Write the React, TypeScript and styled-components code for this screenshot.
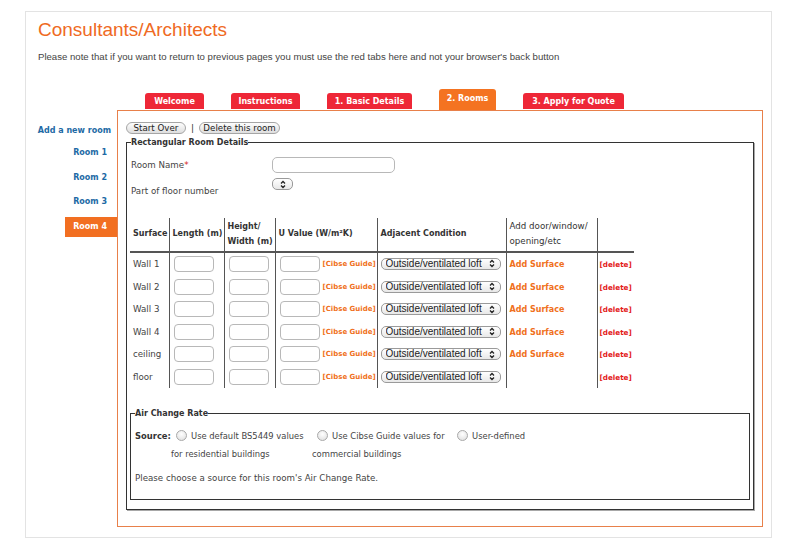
import styled, { createGlobalStyle } from "styled-components";

const GlobalStyle = createGlobalStyle`
  body {
    margin: 0;
    background: #fff;
    font-family: "DejaVu Sans", Verdana, sans-serif;
    color: #444;
  }
`;

const tabs = [
  { label: "Welcome", width: 59 },
  { label: "Instructions", width: 69 },
  { label: "1. Basic Details", width: 85 },
  { label: "2. Rooms", width: 57, active: true },
  { label: "3. Apply for Quote", width: 101 },
];

const surfaces = [
  { name: "Wall 1", add: true },
  { name: "Wall 2", add: true },
  { name: "Wall 3", add: true },
  { name: "Wall 4", add: true },
  { name: "ceiling", add: true },
  { name: "floor", add: false },
];

function Arrows() {
  return (
    <svg width="6" height="9" viewBox="0 0 6 9">
      <path d="M1 3.5 L3 1.5 L5 3.5" fill="none" stroke="#222" strokeWidth="1.3" />
      <path d="M1 5.5 L3 7.5 L5 5.5" fill="none" stroke="#222" strokeWidth="1.3" />
    </svg>
  );
}

export default function App() {
  return (
    <>
      <GlobalStyle />
      <Card>
        <Title>Consultants/Architects</Title>
        <Note>
          Please note that if you want to return to previous pages you must use the red tabs here
          and not your browser's back button
        </Note>
        <TabBar>
          {tabs.map((t) => (
            <Tab key={t.label} $width={t.width} $active={!!t.active}>
              {t.label}
            </Tab>
          ))}
        </TabBar>
        <Main>
          <Sidebar>
            <AddLink>Add a new room</AddLink>
            <RoomLink>Room 1</RoomLink>
            <RoomLink>Room 2</RoomLink>
            <RoomLink>Room 3</RoomLink>
            <RoomLink $active>Room 4</RoomLink>
          </Sidebar>
          <Panel>
            <ButtonRow>
              <SmallButton $width={60}>Start Over</SmallButton>
              <Pipe>|</Pipe>
              <SmallButton $width={81}>Delete this room</SmallButton>
            </ButtonRow>
            <RoomFieldset>
              <Legend>Rectangular Room Details</Legend>
              <NameRow>
                <FieldLabel>
                  Room Name<Star>*</Star>
                </FieldLabel>
                <NameInput type="text" />
              </NameRow>
              <FloorRow>
                <FloorLabel>Part of floor number</FloorLabel>
                <SelectBox $width={21}>
                  <Select />
                  <ArrowSlot $center>
                    <Arrows />
                  </ArrowSlot>
                </SelectBox>
              </FloorRow>
              <SurfaceTable>
                <colgroup>
                  <col style={{ width: 39 }} />
                  <col style={{ width: 55 }} />
                  <col style={{ width: 51 }} />
                  <col style={{ width: 102 }} />
                  <col style={{ width: 129 }} />
                  <col style={{ width: 91 }} />
                  <col style={{ width: 37 }} />
                </colgroup>
                <thead>
                  <tr>
                    <Th>Surface</Th>
                    <Th>Length (m)</Th>
                    <Th>
                      Height/
                      <br />
                      Width (m)
                    </Th>
                    <Th>U Value (W/m²K)</Th>
                    <Th>Adjacent Condition</Th>
                    <Th $light>
                      Add door/window/
                      <br />
                      opening/etc
                    </Th>
                    <Th />
                  </tr>
                </thead>
                <tbody>
                  {surfaces.map((s) => (
                    <tr key={s.name}>
                      <Td>{s.name}</Td>
                      <Td>
                        <CellInput type="text" />
                      </Td>
                      <Td>
                        <CellInput type="text" />
                      </Td>
                      <Td>
                        <UCell>
                          <CellInput type="text" />
                          <Cibse>[Cibse Guide]</Cibse>
                        </UCell>
                      </Td>
                      <Td>
                        <SelectBox $width={120}>
                          <Select defaultValue="out">
                            <option value="out">Outside/ventilated loft</option>
                          </Select>
                          <ArrowSlot>
                            <Arrows />
                          </ArrowSlot>
                        </SelectBox>
                      </Td>
                      <Td>{s.add && <AddSurface>Add Surface</AddSurface>}</Td>
                      <Td>
                        <Delete>[delete]</Delete>
                      </Td>
                    </tr>
                  ))}
                </tbody>
              </SurfaceTable>
              <AirFieldset>
                <Legend>Air Change Rate</Legend>
                <SourceRow>
                  <SourceLabel>Source:</SourceLabel>
                  <Option $width={141}>
                    <Radio type="radio" name="src" />
                    Use default BS5449 values for residential buildings
                  </Option>
                  <Option $width={140}>
                    <Radio type="radio" name="src" />
                    Use Cibse Guide values for commercial buildings
                  </Option>
                  <Option>
                    <Radio type="radio" name="src" />
                    User-defined
                  </Option>
                </SourceRow>
                <Hint>Please choose a source for this room's Air Change Rate.</Hint>
              </AirFieldset>
            </RoomFieldset>
          </Panel>
        </Main>
      </Card>
    </>
  );
}

const Card = styled.div`
  box-sizing: border-box;
  width: 747px;
  height: 527px;
  margin: 11px 0 0 25px;
  padding: 7px 7px 0 12px;
  border: 1px solid #e3e3e3;
`;

const Title = styled.h1`
  margin: 0;
  font: normal 19px/22px "Liberation Sans", Arial, sans-serif;
  color: #ef6a23;
`;

const Note = styled.p`
  margin: 10px 0 0;
  font: 9.6px/12px "Liberation Sans", Arial, sans-serif;
  color: #444;
`;

const TabBar = styled.div`
  display: flex;
  align-items: flex-end;
  gap: 27px;
  height: 21px;
  margin: 26px 0 0 107px;
`;

const Tab = styled.div<{ $width: number; $active: boolean }>`
  width: ${(p) => p.$width}px;
  height: ${(p) => (p.$active ? 21 : 16)}px;
  margin-bottom: ${(p) => (p.$active ? 0 : 1)}px;
  padding-bottom: ${(p) => (p.$active ? 2 : 0)}px;
  box-sizing: border-box;
  display: flex;
  align-items: center;
  justify-content: center;
  background: ${(p) => (p.$active ? "#f47321" : "#ee2737")};
  color: #fff;
  font-weight: bold;
  font-size: 8px;
  border-radius: 3px 3px 0 0;
  white-space: nowrap;
`;

const Main = styled.div`
  display: flex;
`;

const Sidebar = styled.div`
  width: 79px;
  display: flex;
  flex-direction: column;
  align-items: flex-end;
  gap: 4.5px;
  padding-top: 14.5px;
  font-weight: bold;
  font-size: 8px;
  color: #1d6aa5;
`;

const AddLink = styled.div`
  line-height: 11px;
  padding-right: 6px;
  margin-bottom: 3.3px;
  white-space: nowrap;
`;

const RoomLink = styled.div<{ $active?: boolean }>`
  height: 20px;
  line-height: 20px;
  padding: 0 10px 0 8.5px;
  background: ${(p) => (p.$active ? "#f26f21" : "transparent")};
  color: ${(p) => (p.$active ? "#fff" : "#1d6aa5")};
`;

const Panel = styled.div`
  box-sizing: border-box;
  width: 646px;
  height: 417px;
  border: 1px solid #e8804a;
  padding: 10.5px 8px 0;
`;

const ButtonRow = styled.div`
  display: flex;
  align-items: center;
  gap: 5px;
  height: 12px;
`;

const SmallButton = styled.button<{ $width: number }>`
  box-sizing: border-box;
  width: ${(p) => p.$width}px;
  height: 12px;
  padding: 0;
  border: 1px solid #a5a5a5;
  border-radius: 6px;
  background: linear-gradient(#fdfdfd, #dedede);
  font: 8.7px/10px "DejaVu Sans", Verdana, sans-serif;
  color: #222;
`;

const Pipe = styled.span`
  font-size: 9px;
  color: #333;
`;

const RoomFieldset = styled.fieldset`
  margin: 3.3px 0 0;
  padding: 0 3px 9px 4px;
  border: 1px solid #333;
  box-shadow: 1px 1px 0 #a8a8a8;
  min-width: 0;
  font-size: 8.7px;
`;

const Legend = styled.legend`
  padding: 0;
  font-weight: bold;
  font-size: 8px;
  line-height: 11px;
  color: #333;
`;

const NameRow = styled.div`
  display: grid;
  grid-template-columns: 141px auto;
  align-items: center;
  margin-top: 9.5px;
  height: 16px;
`;

const FloorRow = styled.div`
  display: grid;
  grid-template-columns: 141px auto;
  align-items: start;
  margin-top: 5px;
`;

const FieldLabel = styled.label`
  line-height: 11px;
  color: #444;
`;

const FloorLabel = styled(FieldLabel)`
  padding-top: 8px;
`;

const Star = styled.span`
  color: #d42020;
`;

const NameInput = styled.input`
  box-sizing: border-box;
  width: 123px;
  height: 16px;
  border: 1px solid #b8b8b8;
  border-radius: 5px;
  padding: 0 4px;
`;

const SelectBox = styled.div<{ $width: number }>`
  position: relative;
  display: inline-block;
  width: ${(p) => p.$width}px;
  height: 12px;
  vertical-align: middle;
`;

const Select = styled.select`
  appearance: none;
  box-sizing: border-box;
  width: 100%;
  height: 100%;
  margin: 0;
  padding: 0 0 0 4px;
  border: 1px solid #9a9a9a;
  border-radius: 5px;
  background: linear-gradient(#ffffff, #e8e8e8);
  font: 10px/10px "Liberation Sans", Arial, sans-serif;
  color: #222;
  display: block;
`;

const ArrowSlot = styled.span<{ $center?: boolean }>`
  position: absolute;
  top: 1.5px;
  ${(p) => (p.$center ? "left: 7.5px;" : "right: 6px;")}
  pointer-events: none;
  line-height: 0;
`;

const SurfaceTable = styled.table`
  width: 504px;
  margin: 20.4px 0 0 -1px;
  border-collapse: collapse;
  table-layout: fixed;
`;

const Th = styled.th<{ $light?: boolean }>`
  height: 33px;
  padding: 0 3px;
  border-right: 1px solid #555;
  border-bottom: 2px solid #555;
  text-align: left;
  vertical-align: middle;
  font-weight: ${(p) => (p.$light ? "normal" : "bold")};
  font-size: ${(p) => (p.$light ? 8.7 : 8)}px;
  line-height: 15.5px;
  color: #333;
  white-space: nowrap;

  &:last-child {
    border-right: none;
  }
`;

const Td = styled.td`
  height: 22.6px;
  padding: 0 3px;
  border-right: 1px solid #555;
  vertical-align: middle;
  color: #444;
  white-space: nowrap;

  &:last-child {
    border-right: none;
    padding-left: 2px;
  }
`;

const CellInput = styled.input`
  box-sizing: border-box;
  display: block;
  width: 40px;
  height: 16px;
  margin: 0 0 0 1px;
  padding: 0 3px;
  border: 1px solid #b8b8b8;
  border-radius: 4px;
`;

const UCell = styled.div`
  display: flex;
  align-items: center;
  gap: 3px;
`;

const Cibse = styled.span`
  font-weight: bold;
  font-size: 7px;
  color: #f07020;
`;

const AddSurface = styled.span`
  font-weight: bold;
  font-size: 8px;
  color: #f07020;
`;

const Delete = styled.span`
  font-weight: bold;
  font-size: 7.2px;
  color: #e31b1b;
`;

const AirFieldset = styled.fieldset`
  margin: 19.5px 0 0 -1px;
  padding: 9.4px 4px 11px;
  border: 1px solid #333;
  min-width: 0;
  font-size: 8.4px;
`;

const SourceRow = styled.div`
  display: flex;
  align-items: flex-start;
  line-height: 17.6px;
  color: #444;
`;

const SourceLabel = styled.span`
  width: 36px;
  font-weight: bold;
  color: #333;
`;

const Option = styled.label<{ $width?: number }>`
  display: block;
  ${(p) => (p.$width ? `width: ${p.$width}px;` : "")}
`;

const Radio = styled.input`
  appearance: none;
  box-sizing: border-box;
  width: 11px;
  height: 11px;
  margin: 0 4px 0 5px;
  vertical-align: -2px;
  border: 1px solid #a9a9a9;
  border-radius: 50%;
  background: radial-gradient(circle at 50% 35%, #ffffff, #dcdcdc);
`;

const Hint = styled.p`
  margin: 6.8px 0 0;
  font-size: 8.7px;
  line-height: 17.6px;
  color: #444;
`;
